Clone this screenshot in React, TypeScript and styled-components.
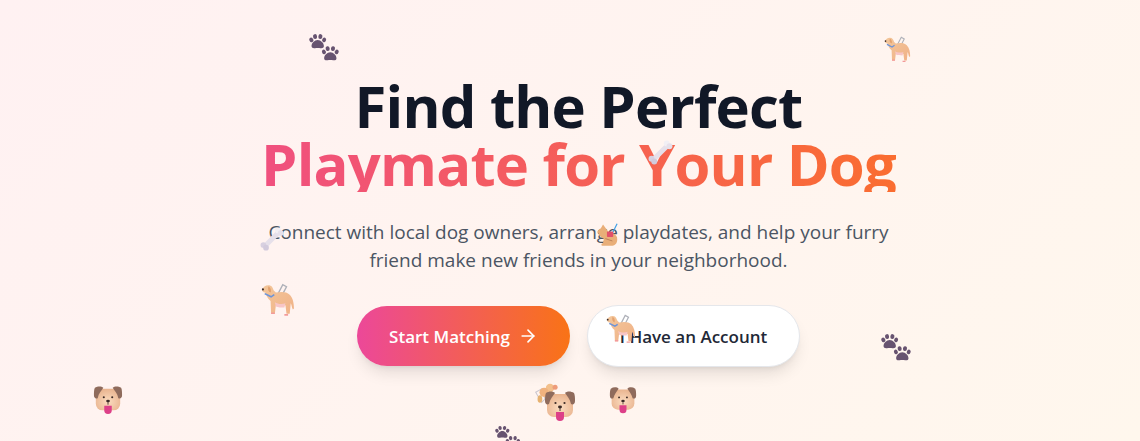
import styled, { createGlobalStyle } from 'styled-components'
import { ArrowRight } from 'lucide-react'

const GlobalStyle = createGlobalStyle`
  html, body {
    margin: 0;
    padding: 0;
  }
  body {
    font-family: "Open Sans", "Noto Sans", sans-serif;
  }
`

type Kind = 'paw' | 'guide' | 'bone' | 'service' | 'face' | 'poodle'

const stickers: { kind: Kind; x: number; y: number; size: number }[] = [
  { kind: 'paw', x: 309, y: 33, size: 31 },
  { kind: 'guide', x: 884, y: 36, size: 27 },
  { kind: 'bone', x: 648, y: 140, size: 25 },
  { kind: 'bone', x: 260, y: 227, size: 24 },
  { kind: 'service', x: 596, y: 223, size: 25 },
  { kind: 'guide', x: 261, y: 283, size: 34 },
  { kind: 'guide', x: 606, y: 314, size: 30 },
  { kind: 'paw', x: 881, y: 333, size: 31 },
  { kind: 'face', x: 93, y: 385, size: 30 },
  { kind: 'poodle', x: 534, y: 383, size: 27 },
  { kind: 'face', x: 544, y: 390, size: 32 },
  { kind: 'face', x: 609, y: 386, size: 28 },
  { kind: 'paw', x: 495, y: 425, size: 26 },
]

const PawPrint = ({ cx, cy }: { cx: number; cy: number }) => (
  <g fill="#675370" transform={`translate(${cx} ${cy}) scale(1.1)`}>
    <path d="M0 -2c3 0 5.800 3 5.800 5.600 0 1.700-1.600 2.300-3.200 2-1.700-.3-3.500-.3-5.200 0-1.600.3-3.200-.3-3.200-2C-5.800 1-3 -2 0 -2z" />
    <ellipse cx="-6" cy="-2.200" rx="1.800" ry="2.200" transform="rotate(-25 -6 -2.200)" />
    <ellipse cx="-2.500" cy="-5.300" rx="1.900" ry="2.300" transform="rotate(-10 -2.500 -5.300)" />
    <ellipse cx="2.500" cy="-5.300" rx="1.900" ry="2.300" transform="rotate(10 2.500 -5.300)" />
    <ellipse cx="6" cy="-2.200" rx="1.800" ry="2.200" transform="rotate(25 6 -2.200)" />
  </g>
)

const StickerArt = ({ kind }: { kind: Kind }) => {
  if (kind === 'paw') {
    return (
      <>
        <PawPrint cx={9} cy={9.500} />
        <PawPrint cx={22} cy={22} />
      </>
    )
  }
  if (kind === 'bone') {
    return (
      <>
        <path d="M7 25L25 7" stroke="#e6e0ea" strokeWidth="6.500" />
        <circle cx="4.500" cy="24" r="3.800" fill="#d8d0e0" />
        <circle cx="8" cy="27.500" r="3.800" fill="#d2cadc" />
        <circle cx="24" cy="4.500" r="3.800" fill="#f2eff4" />
        <circle cx="27.500" cy="8" r="3.800" fill="#e6e0ea" />
      </>
    )
  }
  if (kind === 'face') {
    return (
      <>
        <defs>
          <radialGradient id="faceFill" cx="50%" cy="60%" r="60%">
            <stop offset="0%" stopColor="#fbdcc0" />
            <stop offset="100%" stopColor="#e9b48f" />
          </radialGradient>
        </defs>
        <rect x="3" y="4" width="26" height="23" rx="7" fill="url(#faceFill)" />
        <path d="M2 3c3-2 7-2 9 0-2 3-5 6-6 11-2 1-4 0-4-3 0-3 0-6 1-8z" fill="#8f6b5c" />
        <path d="M30 3c-3-2-7-2-9 0 2 3 5 6 6 11 2 1 4 0 4-3 0-3 0-6-1-8z" fill="#8f6b5c" />
        <circle cx="11.500" cy="13" r="1.100" fill="#3b2a26" />
        <circle cx="20.500" cy="13" r="1.100" fill="#3b2a26" />
        <ellipse cx="16" cy="17" rx="2" ry="1.400" fill="#3b2a26" />
        <path d="M16 18v3" stroke="#3b2a26" strokeWidth=".9" />
        <path d="M12 22h8v5a4 4 0 0 1-8 0z" fill="#dd3f88" />
      </>
    )
  }
  if (kind === 'service') {
    return (
      <>
        <path d="M27 1l-6 12" stroke="#3f9fe6" strokeWidth="1.500" />
        <path d="M3 13c-2-3 1-5 3-6l3-5 3 4c2 2 3 4 4 6 5 0 10 2 11 7 1 6-2 10-6 10H8c-2 0-1-3 1-3l1-6c-3-2-6-3-7-7z" fill="#e9ae78" />
        <rect x="14" y="11" width="8" height="7" rx="1" fill="#e2506a" />
        <path d="M12 20l9 3" stroke="#b97f58" strokeWidth="1.200" />
      </>
    )
  }
  if (kind === 'poodle') {
    return (
      <>
        <path d="M2 11l7-4 4 12-4 4z" fill="none" stroke="#c9c5cf" strokeWidth="1.200" />
        <circle cx="19" cy="6" r="5" fill="#f3c08c" />
        <circle cx="12" cy="11" r="5.500" fill="#f0b27e" />
        <ellipse cx="7" cy="19" rx="2.800" ry="4.500" fill="#e6b16f" />
        <circle cx="25" cy="5" r="3" fill="#ee9c7a" />
      </>
    )
  }
  return (
    <>
      <defs>
        <linearGradient id="guideFill" x1="0" y1="0" x2="1" y2="1">
          <stop offset="0%" stopColor="#f3c79b" />
          <stop offset="100%" stopColor="#f0b186" />
        </linearGradient>
      </defs>
      <path d="M14 14L20.500 1.500l3.500 2L18 15" fill="none" stroke="#aeb0b8" strokeWidth="1.300" />
      <path d="M1 6c1-2 3-4 6-4 3 0 4 2 5 5l2 2c5-1 10-1 13 2 3 3 4 8 4 13l-1 1c-1-2-1-4-2-6l-1 10h-3l-1-8c-3 1-6 1-9 0l-1 8H9.500L9 17C6 15 5 11 4 9 3 9 1 8 1 6z" fill="url(#guideFill)" />
      <path d="M13 18c3 2 7 2 10 1l-1 4c-3 0-6 0-8-1z" fill="#f7c5c6" />
      <path d="M9.500 28.500h3.500M22 30h3.500" stroke="#f39a9a" strokeWidth="1.500" />
      <path d="M3.500 10l6 3 3-2" fill="none" stroke="#6d94d8" strokeWidth="1.500" />
      <path d="M7 3c2 1 3 4 2 6-2-1-3-3-2-6z" fill="#e3a26f" />
      <circle cx="1.800" cy="6" r="1" fill="#3b2a26" />
    </>
  )
}

const App = () => (
  <Page>
    <GlobalStyle />
    <Hero>
      <Heading>
        Find the Perfect
        <HeadingAccent>Playmate for Your Dog</HeadingAccent>
      </Heading>
      <Lead>
        Connect with local dog owners, arrange playdates, and help your furry friend make new
        friends in your neighborhood.
      </Lead>
      <Actions>
        <PrimaryButton>
          Start Matching
          <ArrowRight size={20} strokeWidth={2} />
        </PrimaryButton>
        <SecondaryButton>I Have an Account</SecondaryButton>
      </Actions>
    </Hero>
    {stickers.map((s, i) => (
      <Sticker
        key={i}
        viewBox="0 0 32 32"
        width={s.size}
        height={s.size}
        style={{ left: s.x, top: s.y }}
      >
        <StickerArt kind={s.kind} />
      </Sticker>
    ))}
  </Page>
)

const Page = styled.div`
  position: relative;
  height: 441px;
  overflow: hidden;
  background: linear-gradient(135deg, #fff1f2 0%, #fff7ed 100%);
`

const Hero = styled.div`
  display: flex;
  flex-flow: column;
  align-items: center;
  padding: 76px 0 0 17px;
`

const Heading = styled.h1`
  margin: 0;
  font-size: 58px;
  font-weight: 700;
  line-height: 60px;
  letter-spacing: -0.8px;
  color: #111827;
  text-align: center;
`

const HeadingAccent = styled.span`
  display: block;
  line-height: 56px;
  background: linear-gradient(90deg, #f0507f, #fa6d30);
  -webkit-background-clip: text;
  background-clip: text;
  color: transparent;
`

const Lead = styled.p`
  width: 672px;
  margin: 26px 0 0;
  font-size: 19px;
  line-height: 28px;
  color: #4b5563;
  text-align: center;
`

const Actions = styled.div`
  display: flex;
  flex-flow: row;
  gap: 17px;
  margin-top: 32px;
`

const PrimaryButton = styled.button`
  display: flex;
  align-items: center;
  justify-content: center;
  gap: 8px;
  width: 213px;
  height: 60px;
  border: 0;
  border-radius: 30px;
  background: linear-gradient(90deg, #ec4899, #f97316);
  box-shadow: 0 10px 15px -3px rgba(0, 0, 0, 0.1), 0 4px 6px -4px rgba(0, 0, 0, 0.1);
  color: #fff;
  font-family: inherit;
  font-size: 17px;
  font-weight: 600;
`

const SecondaryButton = styled.button`
  width: 213px;
  height: 62px;
  margin-top: -1px;
  border: 1px solid #e5e7eb;
  border-radius: 31px;
  background: #fff;
  box-shadow: 0 10px 15px -3px rgba(0, 0, 0, 0.1), 0 4px 6px -4px rgba(0, 0, 0, 0.1);
  color: #1f2937;
  font-family: inherit;
  font-size: 17px;
  font-weight: 600;
`

const Sticker = styled.svg`
  position: absolute;
  pointer-events: none;
`

export default App
